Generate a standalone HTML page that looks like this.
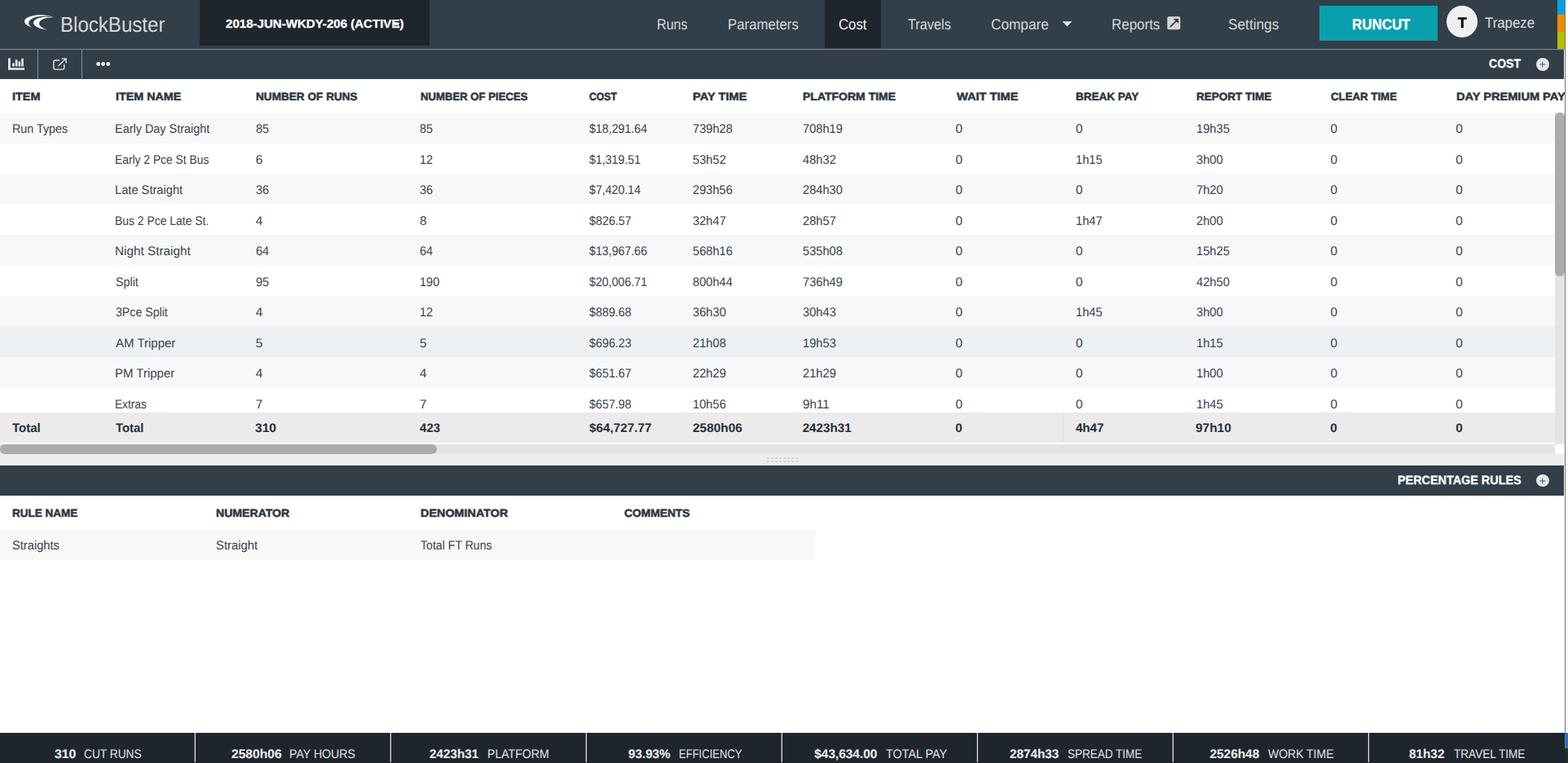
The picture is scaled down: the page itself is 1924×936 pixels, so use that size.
<!DOCTYPE html>
<html lang="en">
<head>
<meta charset="utf-8">
<title>BlockBuster - Cost</title>
<style>
*{box-sizing:border-box;margin:0;padding:0}
html,body{width:1924px;height:936px;overflow:hidden;background:#fff}
body{position:relative;font-family:"Liberation Sans",sans-serif;color:#2f3a45;font-size:15px;text-rendering:geometricPrecision}
#app{position:absolute;left:0;top:0;width:1920px;height:936px;overflow:hidden;background:#fff}
.edge{position:absolute;left:1920px;top:0;width:1px;height:918px;background:#767676}
.edge-blue{position:absolute;left:1921px;top:899px;width:3px;height:19px;background:#2873c4}
.edge-dark{position:absolute;left:1920px;top:918px;width:4px;height:18px;background:#1f2f2a}
.t{position:absolute;line-height:1;white-space:pre;transform-origin:0 0}
/* nav */
.nav{position:absolute;left:0;top:0;width:1920px;height:60px;background:#323e48}
.navline{position:absolute;left:0;top:60px;width:1920px;height:1px;background:#8a8b8c}
.logo{position:absolute;left:20px;top:8px;width:60px;height:40px}
.brand{font-size:26px;color:#d6d8da}
.sched{position:absolute;left:245px;top:0;width:282px;height:56px;background:#1f252d}
.sched .t{font-size:14.4px;font-weight:700;color:#fff}
.nav a{color:#d8dadc;font-size:18.2px;text-decoration:none}
.nav a.on{color:#f4f4f4}
.tab-on{position:absolute;left:1012px;top:0;width:69px;height:59px;background:#1f252d}
.caret{position:absolute;left:1302.7px;top:25.5px;width:13px;height:7px}
.ext{position:absolute;left:1432px;top:20px;width:17px;height:17px}
.runcut{position:absolute;left:1619px;top:7px;width:145px;height:43px;background:#0a9fad}
.runcut .t{font-size:18px;font-weight:700;color:#fff}
.avatar{position:absolute;left:1775px;top:7px;width:37.8px;height:38.5px;border-radius:50%;background:#efefef}
.avatar .t{font-size:18px;font-weight:700;color:#000}
.user{font-size:18.2px;color:#dcdee0}
.stripe{position:absolute;left:1911px;width:9px}
/* toolbar */
.bar{position:absolute;left:0;width:1919px;background:#323e48}
.ttl{font-size:14.9px;font-weight:700;color:#fff}
.vdiv{position:absolute;top:0;width:1px;height:36px;background:#8a8d8f}
.ico{position:absolute}
.plus{position:absolute;width:16.4px;height:16.4px;border-radius:50%;background:#e8e8e8}
.plus svg{display:block}
/* grid */
.grid{position:absolute;left:0;top:97px;width:1920px;height:460px;overflow:hidden;background:#fff}
.hrow{position:absolute;left:0;top:0;width:1919.5px;height:41px;overflow:hidden}
.h{font-size:13.4px;font-weight:700;color:#2c3641}
.row{position:absolute;left:0;width:1908px;height:37.5px;background:#fff}
.row.odd{background:#f8f8f8;box-shadow:0 1px 0 #fbfbfb}
.row.pre{box-shadow:0 1px 0 #f3f4f6}
.row.hov{background:#eef1f4}
.c{font-size:15.4px;color:#39434d}
.trow{position:absolute;left:0;top:409px;width:1908px;height:37px;background:#eceaeb}
.trow .c{font-size:15.2px;font-weight:700;color:#262f39}
.vtrack{position:absolute;left:1908px;top:41px;width:12px;height:407px;background:#e4e4e4}
.vthumb{position:absolute;left:0;top:0;width:12px;height:201px;border-radius:6px;background:#ababab}
.htrack{position:absolute;left:0;top:448px;width:1908px;height:12px;background:#e4e4e4}
.hthumb{position:absolute;left:0;top:0;width:536px;height:12px;border-radius:6px;background:#ababab}
.corner{position:absolute;left:1908px;top:448px;width:12px;height:12px;background:#fff}
.colmark{position:absolute;left:1304px;top:1px;width:0;height:35px;border-left:1px dotted #cfcfcf}
.cursor{position:absolute;left:236.6px;top:25.6px;width:10px;height:8px}
/* splitter */
.split{position:absolute;left:0;top:557px;width:1920px;height:14px;background:#ededed}
.grip{position:absolute;left:940.8px;top:561px;width:39px;height:6px}
/* rules */
.rules{position:absolute;left:0;top:608px;width:1919px;height:291px;background:#fff}
.rules .row{top:42px;width:1000px;height:37px;background:#f8f8f8}
/* footer */
.foot{position:absolute;left:0;top:899px;width:1920px;height:37px;background:#1f252d}
.fc{position:absolute;top:0;width:240px;height:36px;border-right:1px solid #e6e6e6;box-shadow:inset -1px 0 0 rgba(255,255,255,.22);color:#fff;font-size:15.4px}
.fc:last-child{border-right:0;box-shadow:none}
.fc b{font-weight:700;color:#ededed}
.fc span{color:#e6e6e6}

</style>
</head>
<body>
<div id="app">
<header class="nav">
<svg class="logo" viewBox="0 0 1404 936" aria-hidden="true"><path fill="#fff" d="M1100 320C900 220 500 200 300 330C180 410 230 530 440 600C330 520 320 420 450 350C600 270 850 250 1100 320Z"/><path fill="#fff" d="M1100 320C850 270 620 300 520 400C430 500 560 640 900 670C720 620 620 530 670 440C720 350 900 310 1100 320Z"/></svg>
<span class="t brand" style="left:73.55px;top:17px;transform:scaleX(0.9257)">BlockBuster</span>
<div class="sched"><svg class="cursor" viewBox="0 0 10 8" aria-hidden="true"><path fill="#f4f4f4" d="M0.3 0.6L8.6 1.9L6.6 3.4L8 5.6L6.4 6.4L5 4.3L3.3 6z"/></svg><span class="t" style="left:31.53px;top:22.75px;transform:scaleX(1.0467);-webkit-text-stroke:0.3px currentColor">2018-JUN-WKDY-206 (ACTIVE)</span></div>
<div class="tab-on"></div>
<nav>
<a class="t" style="left:805.87px;top:21.02px;transform:scaleX(0.8853)">Runs</a>
<a class="t" style="left:892.61px;top:21.02px;transform:scaleX(0.9231)">Parameters</a>
<a class="t on" style="left:1028.82px;top:21.02px;transform:scaleX(0.922)">Cost</a>
<a class="t" style="left:1113.5px;top:21.02px;transform:scaleX(0.8973)">Travels</a>
<a class="t" style="left:1216.19px;top:21.02px;transform:scaleX(0.9465)">Compare</a>
<svg class="caret" viewBox="0 0 13 7" aria-hidden="true"><path fill="#e6e6e6" d="M0.4 0.3h12L6.4 6.5z"/></svg>
<a class="t" style="left:1363.8px;top:21.02px;transform:scaleX(0.9316)">Reports</a>
<svg class="ext" viewBox="0 0 17 17" aria-hidden="true"><rect x="0.3" y="0.3" width="16" height="16" rx="2" fill="#d6d6d6"/><path d="M3.7 13.2L11.6 5.3" fill="none" stroke="#343e48" stroke-width="1.7"/><path d="M7.9 2.9h6.2v6.2z" fill="#343e48"/></svg>
<a class="t" style="left:1507.16px;top:21.02px;transform:scaleX(0.9481)">Settings</a>
</nav>
<div class="runcut"><span class="t" style="left:39.99px;top:13.75px;transform:scaleX(0.9403);-webkit-text-stroke:0.3px currentColor">RUNCUT</span></div>
<div class="avatar"><span class="t" style="left:13.69px;top:11.75px;-webkit-text-stroke:0.3px currentColor">T</span></div>
<span class="t user" style="left:1821.79px;top:19.42px;transform:scaleX(0.9243)">Trapeze</span>
<div class="stripe" style="top:0;height:18px;background:#00a2e1"></div>
<div class="stripe" style="top:18px;height:21px;background:#ef8c00"></div>
<div class="stripe" style="top:39px;height:21px;background:#b6bf00"></div>
</header>
<div class="navline"></div>
<div class="bar" style="top:61px;height:36px">
<svg class="ico" style="left:10px;top:10px;width:21px;height:16px" viewBox="0 0 21 16" aria-hidden="true"><path fill="#ececec" d="M0 0.5h2.8v11.7H20v2.5H0zM5.1 6.5h2.6v4H5.1zM8.8 2.2h2.6v8.3H8.8zM12.5 4.2h2.6v6.3h-2.6zM16.2 0.7h2.6v9.8h-2.6z"/></svg>
<div class="vdiv" style="left:46px"></div>
<svg class="ico" style="left:64px;top:9px;width:19px;height:18px" viewBox="0 0 19 18" aria-hidden="true"><path fill="none" stroke="#e4e4e4" stroke-width="1.4" stroke-linecap="round" stroke-linejoin="round" d="M8.6 4H3.8a2 2 0 0 0-2 2v7.1a2 2 0 0 0 2 2h9a2 2 0 0 0 2-2V9.4M8 10.6L16.6 2.3M12.1 1.9h5v5"/></svg>
<div class="vdiv" style="left:100px"></div>
<svg class="ico" style="left:117px;top:14px;width:20px;height:8px" viewBox="0 0 20 8" aria-hidden="true"><circle cx="3.6" cy="3.5" r="2.4" fill="#f0f0f0"/><circle cx="9.6" cy="3.5" r="2.4" fill="#f0f0f0"/><circle cx="15.7" cy="3.5" r="2.4" fill="#f0f0f0"/></svg>
<span class="t ttl" style="left:1827.01px;top:10.75px;transform:scaleX(0.9426);-webkit-text-stroke:0.3px currentColor">COST</span>
<div class="plus" style="left:1884.8px;top:9.5px"><svg viewBox="0 0 16.4 16.4" width="16.4" height="16.4" aria-hidden="true"><path d="M7.7 4.5v7.2M4.2 8h7.4" stroke="#4a545e" stroke-width="1" fill="none"/></svg></div>
</div>
<section class="grid" id="cost-grid">
<div class="hrow"><span class="t h" style="left:15.44px;top:14.76px;transform:scaleX(1.0782);-webkit-text-stroke:0.5px currentColor">ITEM</span><span class="t h" style="left:141.75px;top:14.76px;transform:scaleX(1.0695);-webkit-text-stroke:0.5px currentColor">ITEM NAME</span><span class="t h" style="left:314.48px;top:14.76px;transform:scaleX(1.0158);-webkit-text-stroke:0.5px currentColor">NUMBER OF RUNS</span><span class="t h" style="left:515.5px;top:14.76px;transform:scaleX(0.9821);-webkit-text-stroke:0.5px currentColor">NUMBER OF PIECES</span><span class="t h" style="left:723.25px;top:14.76px;transform:scaleX(0.9128);-webkit-text-stroke:0.5px currentColor">COST</span><span class="t h" style="left:850.43px;top:14.76px;transform:scaleX(1.0929);-webkit-text-stroke:0.5px currentColor">PAY TIME</span><span class="t h" style="left:985.46px;top:14.76px;transform:scaleX(1.0459);-webkit-text-stroke:0.5px currentColor">PLATFORM TIME</span><span class="t h" style="left:1173.56px;top:14.76px;transform:scaleX(1.0897);-webkit-text-stroke:0.5px currentColor">WAIT TIME</span><span class="t h" style="left:1320.48px;top:14.76px;transform:scaleX(1.0088);-webkit-text-stroke:0.5px currentColor">BREAK PAY</span><span class="t h" style="left:1467.98px;top:14.76px;transform:scaleX(1.0088);-webkit-text-stroke:0.5px currentColor">REPORT TIME</span><span class="t h" style="left:1633.02px;top:14.76px;transform:scaleX(0.9897);-webkit-text-stroke:0.5px currentColor">CLEAR TIME</span><span class="t h" style="left:1786.93px;top:14.76px;transform:scaleX(1.0884);-webkit-text-stroke:0.5px currentColor">DAY PREMIUM PAY</span></div>
<div class="row odd" style="top:41px;height:37px"><span class="t c" style="left:14.87px;top:13.16px;transform:scaleX(0.9297)">Run Types</span><span class="t c" style="left:141.16px;top:13.16px;transform:scaleX(0.9381)">Early Day Straight</span><span class="t c" style="left:313.75px;top:13.16px;transform:scaleX(0.9442)">85</span><span class="t c" style="left:515px;top:13.16px;transform:scaleX(0.9442)">85</span><span class="t c" style="left:722.5px;top:13.16px;transform:scaleX(0.9242)">$18,291.64</span><span class="t c" style="left:850px;top:13.16px;transform:scaleX(0.9527)">739h28</span><span class="t c" style="left:985px;top:13.16px;transform:scaleX(0.9527)">708h19</span><span class="t c" style="left:1172.5px;top:13.16px">0</span><span class="t c" style="left:1320px;top:13.16px">0</span><span class="t c" style="left:1467.5px;top:13.16px;transform:scaleX(0.954)">19h35</span><span class="t c" style="left:1632.5px;top:13.16px">0</span><span class="t c" style="left:1786.25px;top:13.16px">0</span></div>
<div class="row" style="top:79px;height:37px"><span class="t c" style="left:141.21px;top:13.16px;transform:scaleX(0.8986)">Early 2 Pce St Bus</span><span class="t c" style="left:313.75px;top:13.16px">6</span><span class="t c" style="left:515px;top:13.16px;transform:scaleX(0.9442)">12</span><span class="t c" style="left:722.5px;top:13.16px;transform:scaleX(0.9215)">$1,319.51</span><span class="t c" style="left:850px;top:13.16px;transform:scaleX(0.954)">53h52</span><span class="t c" style="left:985px;top:13.16px;transform:scaleX(0.954)">48h32</span><span class="t c" style="left:1172.5px;top:13.16px">0</span><span class="t c" style="left:1320px;top:13.16px;transform:scaleX(0.9565)">1h15</span><span class="t c" style="left:1467.5px;top:13.16px;transform:scaleX(0.9565)">3h00</span><span class="t c" style="left:1632.5px;top:13.16px">0</span><span class="t c" style="left:1786.25px;top:13.16px">0</span></div>
<div class="row odd" style="top:116px;height:37px"><span class="t c" style="left:141.14px;top:13.16px;transform:scaleX(0.9527)">Late Straight</span><span class="t c" style="left:313.75px;top:13.16px;transform:scaleX(0.9442)">36</span><span class="t c" style="left:515px;top:13.16px;transform:scaleX(0.9442)">36</span><span class="t c" style="left:722.5px;top:13.16px;transform:scaleX(0.9215)">$7,420.14</span><span class="t c" style="left:850px;top:13.16px;transform:scaleX(0.9527)">293h56</span><span class="t c" style="left:985px;top:13.16px;transform:scaleX(0.9527)">284h30</span><span class="t c" style="left:1172.5px;top:13.16px">0</span><span class="t c" style="left:1320px;top:13.16px">0</span><span class="t c" style="left:1467.5px;top:13.16px;transform:scaleX(0.9565)">7h20</span><span class="t c" style="left:1632.5px;top:13.16px">0</span><span class="t c" style="left:1786.25px;top:13.16px">0</span></div>
<div class="row" style="top:154px;height:37px"><span class="t c" style="left:141.2px;top:13.16px;transform:scaleX(0.9045)">Bus 2 Pce Late St.</span><span class="t c" style="left:313.75px;top:13.16px">4</span><span class="t c" style="left:515px;top:13.16px">8</span><span class="t c" style="left:722.5px;top:13.16px;transform:scaleX(0.9303)">$826.57</span><span class="t c" style="left:850px;top:13.16px;transform:scaleX(0.954)">32h47</span><span class="t c" style="left:985px;top:13.16px;transform:scaleX(0.954)">28h57</span><span class="t c" style="left:1172.5px;top:13.16px">0</span><span class="t c" style="left:1320px;top:13.16px;transform:scaleX(0.9565)">1h47</span><span class="t c" style="left:1467.5px;top:13.16px;transform:scaleX(0.9565)">2h00</span><span class="t c" style="left:1632.5px;top:13.16px">0</span><span class="t c" style="left:1786.25px;top:13.16px">0</span></div>
<div class="row odd" style="top:191px;height:37px"><span class="t c" style="left:141.08px;top:13.16px;transform:scaleX(0.9939)">Night Straight</span><span class="t c" style="left:313.75px;top:13.16px;transform:scaleX(0.9442)">64</span><span class="t c" style="left:515px;top:13.16px;transform:scaleX(0.9442)">64</span><span class="t c" style="left:722.5px;top:13.16px;transform:scaleX(0.9242)">$13,967.66</span><span class="t c" style="left:850px;top:13.16px;transform:scaleX(0.9527)">568h16</span><span class="t c" style="left:985px;top:13.16px;transform:scaleX(0.9527)">535h08</span><span class="t c" style="left:1172.5px;top:13.16px">0</span><span class="t c" style="left:1320px;top:13.16px">0</span><span class="t c" style="left:1467.5px;top:13.16px;transform:scaleX(0.954)">15h25</span><span class="t c" style="left:1632.5px;top:13.16px">0</span><span class="t c" style="left:1786.25px;top:13.16px">0</span></div>
<div class="row" style="top:229px;height:37px"><span class="t c" style="left:141.58px;top:13.16px;transform:scaleX(0.9303)">Split</span><span class="t c" style="left:313.75px;top:13.16px;transform:scaleX(0.9442)">95</span><span class="t c" style="left:515px;top:13.16px;transform:scaleX(0.9442)">190</span><span class="t c" style="left:722.5px;top:13.16px;transform:scaleX(0.9242)">$20,006.71</span><span class="t c" style="left:850px;top:13.16px;transform:scaleX(0.9527)">800h44</span><span class="t c" style="left:985px;top:13.16px;transform:scaleX(0.9527)">736h49</span><span class="t c" style="left:1172.5px;top:13.16px">0</span><span class="t c" style="left:1320px;top:13.16px">0</span><span class="t c" style="left:1467.5px;top:13.16px;transform:scaleX(0.954)">42h50</span><span class="t c" style="left:1632.5px;top:13.16px">0</span><span class="t c" style="left:1786.25px;top:13.16px">0</span></div>
<div class="row odd pre" style="top:266px;height:37px"><span class="t c" style="left:141.68px;top:13.16px;transform:scaleX(0.9196)">3Pce Split</span><span class="t c" style="left:313.75px;top:13.16px">4</span><span class="t c" style="left:515px;top:13.16px;transform:scaleX(0.9442)">12</span><span class="t c" style="left:722.5px;top:13.16px;transform:scaleX(0.9303)">$889.68</span><span class="t c" style="left:850px;top:13.16px;transform:scaleX(0.954)">36h30</span><span class="t c" style="left:985px;top:13.16px;transform:scaleX(0.954)">30h43</span><span class="t c" style="left:1172.5px;top:13.16px">0</span><span class="t c" style="left:1320px;top:13.16px;transform:scaleX(0.9565)">1h45</span><span class="t c" style="left:1467.5px;top:13.16px;transform:scaleX(0.9565)">3h00</span><span class="t c" style="left:1632.5px;top:13.16px">0</span><span class="t c" style="left:1786.25px;top:13.16px">0</span></div>
<div class="row hov" style="top:304px;height:37px"><span class="t c" style="left:142.09px;top:13.16px;transform:scaleX(0.9741)">AM Tripper</span><span class="t c" style="left:313.75px;top:13.16px">5</span><span class="t c" style="left:515px;top:13.16px">5</span><span class="t c" style="left:722.5px;top:13.16px;transform:scaleX(0.9303)">$696.23</span><span class="t c" style="left:850px;top:13.16px;transform:scaleX(0.954)">21h08</span><span class="t c" style="left:985px;top:13.16px;transform:scaleX(0.954)">19h53</span><span class="t c" style="left:1172.5px;top:13.16px">0</span><span class="t c" style="left:1320px;top:13.16px">0</span><span class="t c" style="left:1467.5px;top:13.16px;transform:scaleX(0.9565)">1h15</span><span class="t c" style="left:1632.5px;top:13.16px">0</span><span class="t c" style="left:1786.25px;top:13.16px">0</span></div>
<div class="row odd" style="top:341px;height:37px"><span class="t c" style="left:141.11px;top:13.16px;transform:scaleX(0.9725)">PM Tripper</span><span class="t c" style="left:313.75px;top:13.16px">4</span><span class="t c" style="left:515px;top:13.16px">4</span><span class="t c" style="left:722.5px;top:13.16px;transform:scaleX(0.9303)">$651.67</span><span class="t c" style="left:850px;top:13.16px;transform:scaleX(0.954)">22h29</span><span class="t c" style="left:985px;top:13.16px;transform:scaleX(0.954)">21h29</span><span class="t c" style="left:1172.5px;top:13.16px">0</span><span class="t c" style="left:1320px;top:13.16px">0</span><span class="t c" style="left:1467.5px;top:13.16px;transform:scaleX(0.9565)">1h00</span><span class="t c" style="left:1632.5px;top:13.16px">0</span><span class="t c" style="left:1786.25px;top:13.16px">0</span></div>
<div class="row" style="top:379px;height:37px"><span class="t c" style="left:141.22px;top:13.16px;transform:scaleX(0.888)">Extras</span><span class="t c" style="left:313.75px;top:13.16px">7</span><span class="t c" style="left:515px;top:13.16px">7</span><span class="t c" style="left:722.5px;top:13.16px;transform:scaleX(0.9303)">$657.98</span><span class="t c" style="left:850px;top:13.16px;transform:scaleX(0.954)">10h56</span><span class="t c" style="left:985px;top:13.16px;transform:scaleX(0.9894)">9h11</span><span class="t c" style="left:1172.5px;top:13.16px">0</span><span class="t c" style="left:1320px;top:13.16px">0</span><span class="t c" style="left:1467.5px;top:13.16px;transform:scaleX(0.9565)">1h45</span><span class="t c" style="left:1632.5px;top:13.16px">0</span><span class="t c" style="left:1786.25px;top:13.16px">0</span></div>
<div class="trow"><i class="colmark"></i><span class="t c" style="left:15.26px;top:12.02px;transform:scaleX(0.988)">Total</span><span class="t c" style="left:141.56px;top:12.02px;transform:scaleX(0.9792)">Total</span><span class="t c" style="left:313.38px;top:12.02px;transform:scaleX(1.0278)">310</span><span class="t c" style="left:514.9px;top:12.02px;transform:scaleX(0.9918)">423</span><span class="t c" style="left:722.78px;top:12.02px;transform:scaleX(1.0058)">$64,727.77</span><span class="t c" style="left:850.02px;top:12.02px;transform:scaleX(1.0157)">2580h06</span><span class="t c" style="left:984.63px;top:12.02px">2423h31</span><span class="t c" style="left:1172.27px;top:12.02px">0</span><span class="t c" style="left:1319.9px;top:12.02px">4h47</span><span class="t c" style="left:1467.39px;top:12.02px;transform:scaleX(1.0164)">97h10</span><span class="t c" style="left:1632.27px;top:12.02px">0</span><span class="t c" style="left:1786.27px;top:12.02px">0</span></div>
<div class="corner"></div>
<div class="vtrack"><div class="vthumb"></div></div>
<div class="htrack"><div class="hthumb"></div></div>
</section>
<div class="split"></div>
<svg class="grip" viewBox="0 0 39 6" aria-hidden="true"><g fill="#d0d0d0"><rect x="0.10" y="0.2" width="2.7" height="1.9"/><rect x="5.15" y="0.2" width="2.7" height="1.9"/><rect x="10.21" y="0.2" width="2.7" height="1.9"/><rect x="15.26" y="0.2" width="2.7" height="1.9"/><rect x="20.32" y="0.2" width="2.7" height="1.9"/><rect x="25.38" y="0.2" width="2.7" height="1.9"/><rect x="30.43" y="0.2" width="2.7" height="1.9"/><rect x="35.48" y="0.2" width="2.7" height="1.9"/><rect x="0.10" y="4.0" width="2.7" height="1.9"/><rect x="5.15" y="4.0" width="2.7" height="1.9"/><rect x="10.21" y="4.0" width="2.7" height="1.9"/><rect x="15.26" y="4.0" width="2.7" height="1.9"/><rect x="20.32" y="4.0" width="2.7" height="1.9"/><rect x="25.38" y="4.0" width="2.7" height="1.9"/><rect x="30.43" y="4.0" width="2.7" height="1.9"/><rect x="35.48" y="4.0" width="2.7" height="1.9"/></g></svg>
<div class="bar" style="top:571px;height:37px">
<span class="t ttl" style="left:1715.09px;top:12.35px;transform:scaleX(0.9663);-webkit-text-stroke:0.3px currentColor">PERCENTAGE RULES</span>
<div class="plus" style="left:1884.8px;top:10.6px;height:15.8px"><svg viewBox="0 0 16.4 16.4" width="16.4" height="16.4" aria-hidden="true"><path d="M7.7 4.3v7.2M4.2 7.9h7.4" stroke="#4a545e" stroke-width="1" fill="none"/></svg></div>
</div>
<section class="rules">
<div class="hrow"><span class="t h" style="left:15.48px;top:14.76px;transform:scaleX(1.0084);-webkit-text-stroke:0.5px currentColor">RULE NAME</span><span class="t h" style="left:265.46px;top:14.76px;transform:scaleX(1.0515);-webkit-text-stroke:0.5px currentColor">NUMERATOR</span><span class="t h" style="left:515.64px;top:14.76px;transform:scaleX(1.0745);-webkit-text-stroke:0.5px currentColor">DENOMINATOR</span><span class="t h" style="left:765.91px;top:14.76px;transform:scaleX(1.0303);-webkit-text-stroke:0.5px currentColor">COMMENTS</span></div>
<div class="row"><span class="t c" style="left:15.26px;top:12.16px;transform:scaleX(0.9539)">Straights</span><span class="t c" style="left:265.25px;top:12.16px;transform:scaleX(0.9648)">Straight</span><span class="t c" style="left:515.64px;top:12.16px;transform:scaleX(0.9175)">Total FT Runs</span></div>
</section>
<footer class="foot">
<div class="fc" style="left:0px"><b class="t" style="left:66.73px;top:18.61px;transform:scaleX(1.0284);-webkit-text-stroke:0.1px currentColor">310</b><span class="t" style="left:103.21px;top:18.76px;transform:scaleX(0.8919)">CUT RUNS</span></div>
<div class="fc" style="left:240px"><b class="t" style="left:44.16px;top:18.61px;transform:scaleX(1.0143);-webkit-text-stroke:0.1px currentColor">2580h06</b><span class="t" style="left:115.48px;top:18.76px;transform:scaleX(0.9194)">PAY HOURS</span></div>
<div class="fc" style="left:480px"><b class="t" style="left:47.18px;top:18.61px;transform:scaleX(0.9906);-webkit-text-stroke:0.1px currentColor">2423h31</b><span class="t" style="left:118.19px;top:18.76px;transform:scaleX(0.9165)">PLATFORM</span></div>
<div class="fc" style="left:720px"><b class="t" style="left:50.95px;top:18.61px;transform:scaleX(0.9875);-webkit-text-stroke:0.1px currentColor">93.93%</b><span class="t" style="left:112.78px;top:18.76px;transform:scaleX(0.847)">EFFICIENCY</span></div>
<div class="fc" style="left:960px"><b class="t" style="left:39.31px;top:18.61px;-webkit-text-stroke:0.1px currentColor">$43,634.00</b><span class="t" style="left:126.93px;top:18.76px;transform:scaleX(0.9333)">TOTAL PAY</span></div>
<div class="fc" style="left:1200px"><b class="t" style="left:39.17px;top:18.61px;transform:scaleX(0.9927);-webkit-text-stroke:0.1px currentColor">2874h33</b><span class="t" style="left:110.13px;top:18.76px;transform:scaleX(0.8765)">SPREAD TIME</span></div>
<div class="fc" style="left:1440px"><b class="t" style="left:44.47px;top:18.61px;-webkit-text-stroke:0.1px currentColor">2526h48</b><span class="t" style="left:115.83px;top:18.76px;transform:scaleX(0.9076)">WORK TIME</span></div>
<div class="fc" style="left:1680px"><b class="t" style="left:49.47px;top:18.61px;transform:scaleX(0.9943);-webkit-text-stroke:0.1px currentColor">81h32</b><span class="t" style="left:103.57px;top:18.76px;transform:scaleX(0.883)">TRAVEL TIME</span></div>
</footer>
</div>
<div class="edge"></div>
<div class="edge-blue"></div>
<div class="edge-dark"></div>
</body>
</html>
